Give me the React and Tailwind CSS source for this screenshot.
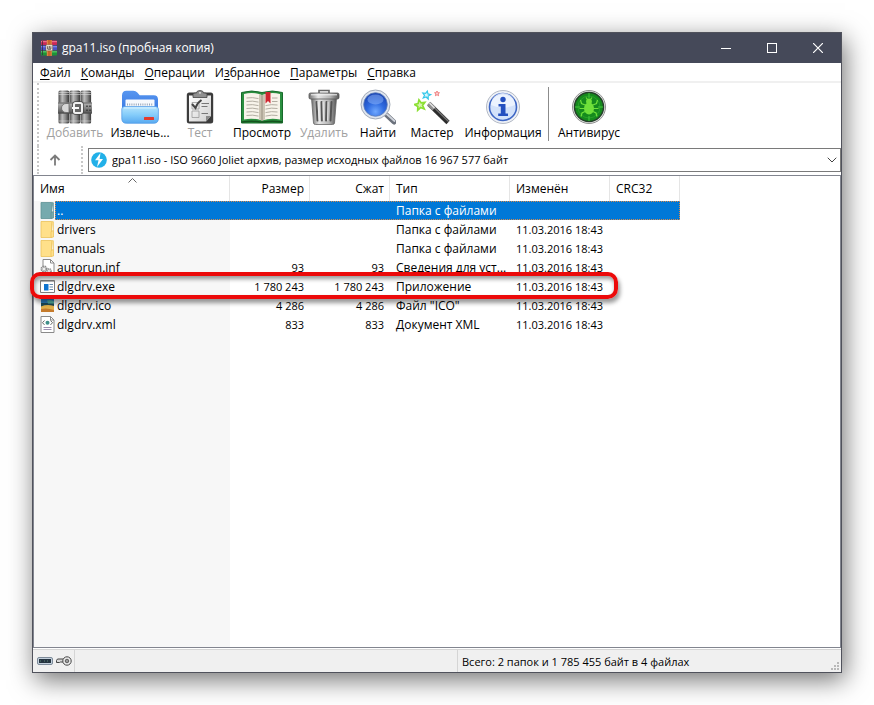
import { ChevronDown } from 'lucide-react';

const menu = [
    ['', 'Ф', 'айл'],
    ['', 'К', 'оманды'],
    ['', 'О', 'перации'],
    ['И', 'з', 'бранное'],
    ['', 'П', 'араметры'],
    ['', 'С', 'правка'],
];

function AppIcon() {
    return (
        <svg viewBox="0 0 16 16" className="h-4 w-4">
            <rect x="0" y="0.5" width="16" height="4.6" rx="0.8" fill="#c92a58" />
            <rect x="0" y="1" width="16" height="1.2" fill="#ee6c8c" />
            <rect x="0" y="5.6" width="16" height="4.6" rx="0.8" fill="#4a52c8" />
            <rect x="0" y="6.1" width="16" height="1.2" fill="#8189ee" />
            <rect x="0" y="10.8" width="16" height="4.7" rx="0.8" fill="#1c9438" />
            <rect x="0" y="11.2" width="16" height="1.2" fill="#5cc96a" />
            <path d="M1.5 1v14" stroke="#3b2530" strokeWidth="0.7" />
            <rect x="5.8" y="0" width="5" height="16" fill="#c8642b" />
            <path d="M6.4 0v16M10.2 0v16" stroke="#f0a25c" strokeWidth="0.6" />
            <rect x="5" y="4.8" width="6.6" height="6" rx="0.6" fill="#fbf6ea" stroke="#6d4a2b" strokeWidth="0.5" />
            <path d="M6.7 6.2v3h3.200v-3M8.300 6v2.600" fill="none" stroke="#33241c" strokeWidth="0.8" />
        </svg>
    );
}

function AddIcon() {
    return (
        <svg viewBox="0 0 34 34" className="h-[34px] w-[34px]">
            <defs>
                <linearGradient id="bookSpine">
                    <stop offset="0" stopColor="#4a4a4a" />
                    <stop offset="0.35" stopColor="#bdbdbd" />
                    <stop offset="0.65" stopColor="#8a8a8a" />
                    <stop offset="1" stopColor="#363636" />
                </linearGradient>
                <linearGradient id="strap" x1="0" y1="0" x2="0" y2="1">
                    <stop offset="0" stopColor="#bcbcbc" />
                    <stop offset="0.5" stopColor="#858585" />
                    <stop offset="1" stopColor="#515151" />
                </linearGradient>
            </defs>
            {[0.5, 11.5, 22.5].map((x) => (
                <g key={x}>
                    <rect x={x} y="0.5" width="10.6" height="33" rx="1.5" fill="url(#bookSpine)" />
                    <path d={`M${x} 2.5h10.6M${x} 4.5h10.6M${x} 31h10.6`} stroke="#e2e2e2" strokeWidth="0.8" opacity="0.7" />
                </g>
            ))}
            <rect x="0" y="12.5" width="34" height="11" fill="url(#strap)" />
            <path d="M0 13h34M0 23h34" stroke="#4a4a4a" strokeWidth="0.8" />
            <path d="M11 13.500H8a4.500 4.500 0 0 0 0 9h3z" fill="#d8d8d8" stroke="#666" strokeWidth="0.8" />
            <rect x="16" y="13" width="8" height="10" rx="1.500" fill="none" stroke="#444" strokeWidth="3.400" />
            <rect x="16" y="13" width="8" height="10" rx="1.500" fill="#666" stroke="#f0f0f0" strokeWidth="2" />
            <path d="M14 18h7" stroke="#fafafa" strokeWidth="2" />
            <path d="M29 15.500v5.500M32 15.500v5.500" stroke="#333" strokeWidth="1.400" strokeDasharray="1.500 2.500" />
        </svg>
    );
}

function ExtractIcon() {
    return (
        <svg viewBox="0 0 38 34" className="h-[34px] w-[38px]">
            <defs>
                <linearGradient id="folderBack" x1="0" y1="0" x2="0" y2="1">
                    <stop offset="0" stopColor="#5796f0" />
                    <stop offset="1" stopColor="#2f6fdd" />
                </linearGradient>
                <linearGradient id="folderFront" x1="0" y1="0" x2="0" y2="1">
                    <stop offset="0" stopColor="#b4e4fd" />
                    <stop offset="0.5" stopColor="#84ccfa" />
                    <stop offset="1" stopColor="#58a9f0" />
                </linearGradient>
            </defs>
            <path d="M1 5.5Q1 .8 5.5 .8h6.8q2.5 0 4 1.8l2.4 2.6h14Q37 5.2 37 9.500v18H1z" fill="url(#folderBack)" />
            <rect x="4.500" y="9.500" width="29" height="12" rx="1" fill="#f6f9fd" />
            <path d="M6 14.500h26" stroke="#9aa7ba" strokeWidth="2" strokeDasharray="1 1.200" />
            <path d="M.8 19q0-2.500 3-2.500h30.400q3.200 0 3.200 2.500v10q-.4 4.300-4.500 4.300H5.300Q1.200 33.300.8 29z" fill="url(#folderFront)" stroke="#4b96e6" strokeWidth="0.7" />
            <path d="M3 18h32" stroke="#d7f1ff" strokeWidth="1" />
            <rect x="23" y="27" width="10" height="3" rx="0.5" fill="#e23b2e" />
        </svg>
    );
}

function TestIcon() {
    return (
        <svg viewBox="0 0 28 34" className="h-[34px] w-7">
            <defs>
                <linearGradient id="paper" x1="0" y1="0" x2="1" y2="1">
                    <stop offset="0" stopColor="#fff" />
                    <stop offset="1" stopColor="#cfcfcf" />
                </linearGradient>
            </defs>
            <rect x="0.8" y="2.5" width="26.4" height="31" rx="2.500" fill="#3c3c3c" />
            <path d="M3 5.500h22v20.500l-5 5.500H3z" fill="url(#paper)" />
            <path d="M25 26h-5v5.500z" fill="#8a8a8a" />
            <path d="M7 7.500V4.500Q7 3 9 3h1.500Q10.500.5 14 .5T17.500 3H19q2 0 2 1.500v3z" fill="#8f8f8f" stroke="#444" strokeWidth="0.8" />
            <circle cx="14" cy="2.800" r="0.900" fill="#eee" />
            <path d="M6 12.500h7v6.500H6zM6 21h7v6.500H6z" fill="none" stroke="#9a9a9a" strokeWidth="0.8" />
            <path d="M6 14l3.500 4Q11 13 15.500 10" fill="none" stroke="#444" strokeWidth="2" />
            <path d="M15.500 13.500h7.500M15.500 16.500h6M15.500 23.500h6.500" stroke="#777" strokeWidth="1" />
        </svg>
    );
}

function ViewIcon() {
    return (
        <svg viewBox="0 0 44 34" className="h-[34px] w-11">
            <path d="M1.500 2.500q10-3 20.500 0 10.500-3 20.500 0V33h-41z" fill="#2a8f3f" stroke="#176a2b" />
            <path d="M4 4q9-2.500 18 1v25.500q-9-3-18-1z" fill="#f7f3ea" />
            <path d="M40 4q-9-2.500-18 1v25.500q9-3 18-1z" fill="#f7f3ea" />
            <path d="M19 4.300l3 .9v25.300l-3-1zM25 4.300l-3 .9v25.300l3-1z" fill="#cbc4b4" />
            <path
                d="M6.500 8q6-1 12 .6M6.500 11.500q6-1 12 .6M6.500 15q6-1 12 .6M6.500 18.500q6-1 12 .6M6.500 22q6-1 12 .6M6.500 25.500q6-1 12 .6M25.500 15.600q6-1.600 12-.6M25.500 19.100q6-1.600 12-.6M25.500 22.600q6-1.600 12-.6M25.500 26.100q6-1.600 12-.6M32 8h5.500M32 11.500h5.500"
                fill="none"
                stroke="#aaa59a"
                strokeWidth="0.9"
            />
            <path d="M25.500 2h5v11.500L28 11l-2.500 2.500z" fill="#cf2530" />
            <path d="M22 5v26" stroke="#8d8676" strokeWidth="0.8" />
            <path d="M2 32q10-1.500 18 0h4q8-1.500 18 0" fill="none" stroke="#14531f" strokeWidth="1.500" />
        </svg>
    );
}

function DeleteIcon() {
    return (
        <svg viewBox="0 0 32 36" className="h-9 w-8">
            <defs>
                <linearGradient id="bin">
                    <stop offset="0" stopColor="#707070" />
                    <stop offset="0.3" stopColor="#e6e6e6" />
                    <stop offset="0.7" stopColor="#b5b5b5" />
                    <stop offset="1" stopColor="#555" />
                </linearGradient>
            </defs>
            <path d="M11 4V1.500h10V4" fill="none" stroke="#666" strokeWidth="1.600" />
            <path d="M3.500 9h25l-2 25q-.2 1.500-2 1.500h-17q-1.800 0-2-1.500z" fill="url(#bin)" stroke="#666" strokeWidth="0.8" />
            <path d="M8.500 13l1 18.500M13.500 13l.4 18.500M18.500 13l-.4 18.500M23.500 13l-1 18.500" stroke="#555" strokeWidth="2" strokeLinecap="round" />
            <path d="M10 13l1 18.500M15 13l.4 18.500M20 13l-.4 18.500" stroke="#f0f0f0" strokeWidth="0.8" />
            <rect x="1" y="4" width="30" height="6" rx="1.500" fill="url(#bin)" stroke="#555" strokeWidth="0.8" />
            <path d="M3 5.800h26" stroke="#f5f5f5" strokeWidth="1" />
        </svg>
    );
}

function FindIcon() {
    return (
        <svg viewBox="0 0 36 36" className="h-9 w-9">
            <defs>
                <radialGradient id="lens" cx="0.5" cy="0.8" r="0.75">
                    <stop offset="0" stopColor="#6fa8ff" />
                    <stop offset="0.5" stopColor="#2f6be0" />
                    <stop offset="1" stopColor="#1a45b5" />
                </radialGradient>
            </defs>
            <path d="M25 24.500l9 8.500" stroke="#6b717c" strokeWidth="5" strokeLinecap="round" />
            <path d="M25.500 24l9 8" stroke="#d0d4dc" strokeWidth="1.800" strokeLinecap="round" />
            <circle cx="15.500" cy="15.500" r="14.500" fill="#dfe5ee" stroke="#a3abb8" strokeWidth="1" />
            <circle cx="15.500" cy="15.500" r="11.800" fill="url(#lens)" stroke="#5f7fb8" strokeWidth="0.8" />
            <ellipse cx="15.500" cy="10.500" rx="8" ry="5" fill="#9cc2ff" opacity="0.45" />
        </svg>
    );
}

function WizardIcon() {
    const star = 'M0-5L1.500-1.700 5-1.500 2.300.9 3.200 4.500 0 2.500-3.200 4.500-2.300.9-5-1.500-1.500-1.700z';

    return (
        <svg viewBox="0 0 36 36" className="h-9 w-9">
            <path d={star} transform="translate(6 16) rotate(-12) scale(1.050)" fill="#d8f5b0" stroke="#8be032" strokeWidth="1.600" />
            <path d={star} transform="translate(12.500 6) rotate(12) scale(.8)" fill="#d8f5fb" stroke="#35c8ea" strokeWidth="1.500" />
            <path d={star} transform="translate(23 4.500) scale(.5)" fill="#fbd5d5" stroke="#ec6b6b" strokeWidth="1.600" />
            <path d="M15 15l19 18.500" stroke="#2d2d2d" strokeWidth="4.600" />
            <path d="M15.800 14.200l19 18.500" stroke="#777" strokeWidth="1.200" />
            <path d="M14.500 14.500l5.500 5.400" stroke="#8e8e8e" strokeWidth="4.600" />
            <path d="M15.500 14l5 5" stroke="#e3e3e3" strokeWidth="1.500" />
        </svg>
    );
}

function InfoIcon() {
    return (
        <svg viewBox="0 0 36 36" className="h-9 w-9">
            <circle cx="18" cy="18" r="16.500" fill="#eef1f6" stroke="#b4bac6" />
            <circle cx="18" cy="18" r="13.500" fill="#d3e2fa" stroke="#3e66c4" strokeWidth="1.600" />
            <path d="M6 16a12 12 0 0 1 24 0q-12 5-24 0z" fill="#f2f7ff" opacity="0.8" />
            <circle cx="18" cy="10.500" r="2.700" fill="#2450c0" />
            <path d="M13.500 15h7v9.500H23V27H13.200v-2.500h2.600v-7h-2.300z" fill="#2450c0" />
        </svg>
    );
}

function AntivirusIcon() {
    return (
        <svg viewBox="0 0 36 36" className="h-9 w-9">
            <circle cx="18" cy="18" r="16.500" fill="#e6e6e6" stroke="#8f8f8f" />
            <circle cx="18" cy="18" r="14.500" fill="#158a1d" stroke="#24402a" strokeWidth="1.500" />
            <circle cx="18" cy="18" r="11" fill="none" stroke="#2ea52e" strokeWidth="0.8" />
            <path d="M18 4v5M18 27v5M4 18h5M27 18h5" stroke="#42c83a" strokeWidth="1" />
            <ellipse cx="18" cy="19.500" rx="5" ry="6" fill="#6fe03a" />
            <circle cx="18" cy="12.500" r="2.900" fill="#6fe03a" />
            <path
                d="M14 16l-3.500-1.500L9.500 11M13.500 19.500H8.500M14 22.500L11 24l-1 3.500M22 16l3.500-1.500L26.500 11M22.500 19.500H27.500M22 22.500L25 24l1 3.500M16.500 10.500L15 8.500M19.500 10.500L21 8.500"
                fill="none"
                stroke="#6fe03a"
                strokeWidth="1.200"
            />
        </svg>
    );
}

const tools = [
    { label: 'Добавить', icon: AddIcon, width: 'w-16', disabled: true },
    { label: 'Извлечь...', icon: ExtractIcon, width: 'w-[66px]' },
    { label: 'Тест', icon: TestIcon, width: 'w-[54px]', disabled: true },
    { label: 'Просмотр', icon: ViewIcon, width: 'w-[70px]' },
    { label: 'Удалить', icon: DeleteIcon, width: 'w-[54px]', disabled: true },
    { label: 'Найти', icon: FindIcon, width: 'w-[54px]' },
    { label: 'Мастер', icon: WizardIcon, width: 'w-[54px]' },
    { label: 'Информация', icon: InfoIcon, width: 'w-[88px]' },
];

function ToolButton({ label, icon: Icon, width, disabled }) {
    return (
        <button
            type="button"
            disabled={disabled}
            className={`${width} flex shrink-0 flex-col items-center pt-[6px] whitespace-nowrap ${disabled ? 'text-[#a0a0a0]' : 'text-black'}`}
        >
            <span className="flex h-9 items-center justify-center">
                <Icon />
            </span>
            <span className="leading-4">{label}</span>
        </button>
    );
}

function FolderIcon({ fill, edge }) {
    return (
        <svg viewBox="0 0 15 17" className="h-[17px] w-[15px]">
            <path d="M1 .5h10.500v16H1z" fill={fill} stroke={edge} strokeWidth="0.8" />
            <path d="M11.500.7h1.800v9" fill={fill} stroke={edge} strokeWidth="0.8" />
            <path d="M11 10.500l2.500-1v6.500L11 16.500z" fill={fill} stroke={edge} strokeWidth="0.8" />
        </svg>
    );
}

function InfIcon() {
    return (
        <svg viewBox="0 0 15 17" className="h-[17px] w-[15px]">
            <path d="M3 .5h7.500L14 4v12.500H3z" fill="#fff" stroke="#8a8a8a" />
            <path d="M10.500.5V4H14" fill="none" stroke="#8a8a8a" />
            <circle cx="4" cy="10" r="2.500" fill="#eee" stroke="#8c8c8c" strokeWidth="2" strokeDasharray="1.400 .6" />
            <circle cx="9" cy="12" r="2" fill="#eee" stroke="#999" strokeWidth="2" strokeDasharray="1.200 .6" />
        </svg>
    );
}

function ExeIcon() {
    return (
        <svg viewBox="0 0 15 17" className="h-[17px] w-[15px]">
            <path d="M.5 2.500h14v12H.5z" fill="#fff" stroke="#7d7d7d" />
            <path d="M1 3.500h13" stroke="#b5b5b5" />
            <path d="M4 6h4.500v6.500H4z" fill="#0f74cf" />
            <path d="M9.500 6.500H13M9.500 9H13M9.500 11.500H13" stroke="#6b8fae" />
        </svg>
    );
}

function IcoIcon() {
    return (
        <svg viewBox="0 0 15 17" className="h-[17px] w-[15px]">
            <path d="M1 2h13v4.500H1z" fill="#2e7fc0" />
            <path d="M1 6h13v4H1z" fill="#1f4a55" />
            <path d="M1 9.500q6-2.500 13-.5v6H1z" fill="#e2b04a" />
            <path d="M1 12q6-1.500 13 1v2H1z" fill="#c57b2c" />
            <path d="M7 3.500q4-1.500 7 1v2H8z" fill="#57b7a5" />
        </svg>
    );
}

function XmlIcon() {
    return (
        <svg viewBox="0 0 15 17" className="h-[17px] w-[15px]">
            <path d="M1 .5h9.500L14 4v12.500H1z" fill="#fff" stroke="#8a8a8a" />
            <path d="M10.500.5V4H14" fill="none" stroke="#8a8a8a" />
            <path d="M4.500 4.500l-2 2.200 2 2.200M10.500 4.500l2 2.200-2 2.200" fill="none" stroke="#555" strokeWidth="0.9" />
            <circle cx="7.500" cy="6.700" r="2" fill="#3f8f8a" />
            <path d="M3.500 11.500h8M3.500 13.500h8" stroke="#9c8fb0" />
        </svg>
    );
}

const parentFolder = <FolderIcon fill="#76aaae" edge="#5f9296" />;
const folder = <FolderIcon fill="#ffe08a" edge="#ecc35a" />;
const date = '11.03.2016 18:43';

const rows = [
    { name: '..', icon: parentFolder, type: 'Папка с файлами', selected: true },
    { name: 'drivers', icon: folder, type: 'Папка с файлами', date },
    { name: 'manuals', icon: folder, type: 'Папка с файлами', date },
    { name: 'autorun.inf', icon: <InfIcon />, size: '93', type: 'Сведения для уст...', date },
    { name: 'dlgdrv.exe', icon: <ExeIcon />, size: '1 780 243', type: 'Приложение', date, marked: true },
    { name: 'dlgdrv.ico', icon: <IcoIcon />, size: '4 286', type: 'Файл "ICO"', date },
    { name: 'dlgdrv.xml', icon: <XmlIcon />, size: '833', type: 'Документ XML', date },
];

function FileRow({ row }) {
    const cell = row.selected ? 'bg-[#0078d7] text-white' : '';

    return (
        <tr className="relative h-[19px]">
            <td className="p-0">
                <div className="flex h-[19px] items-center pl-[6px]">
                    {row.icon}
                    <span className={`h-full flex-1 pl-[2px] leading-[19px] ${cell}`}>{row.name}</span>
                </div>
                {row.selected && (
                    <span className="absolute inset-y-0 right-0 left-[21px] border border-dotted border-[#d98a4a]" />
                )}
                {row.marked && (
                    <span className="absolute -top-[5px] right-[62px] -bottom-[3px] -left-1 z-10 rounded-[10px] border-4 border-[#ec0a0a] shadow-[2px_4px_4px_rgba(0,0,0,0.4),inset_1px_3px_4px_rgba(0,0,0,0.4)]" />
                )}
            </td>
            <td className={`p-0 pr-[6px] text-right text-[11px] ${cell}`}>{row.size}</td>
            <td className={`p-0 pr-[6px] text-right text-[11px] ${cell}`}>{row.size}</td>
            <td className={`p-0 pl-[6px] ${cell}`}>{row.type}</td>
            <td className={`p-0 pl-[6px] text-[11px] ${cell}`}>{row.date}</td>
            <td className={`p-0 ${cell}`} />
        </tr>
    );
}

function Header({ children, className = '' }) {
    return (
        <th scope="col" className={`border-r border-[#e5e5e5] bg-white p-0 pr-[5px] pl-[6px] font-normal ${className}`}>
            {children}
        </th>
    );
}

function TitleBar() {
    return (
        <header className="flex h-[30px] items-center bg-[#454959] text-white">
            <div className="flex flex-1 items-center gap-[5px] pl-2">
                <AppIcon />
                <h1>gpa11.iso (пробная копия)</h1>
            </div>
            <button type="button" aria-label="Свернуть" className="flex h-full w-[46px] items-center justify-center">
                <span className="h-px w-[10px] bg-white" />
            </button>
            <button type="button" aria-label="Развернуть" className="flex h-full w-[46px] items-center justify-center">
                <span className="h-[10px] w-[10px] border border-white" />
            </button>
            <button type="button" aria-label="Закрыть" className="flex h-full w-[46px] items-center justify-center">
                <svg viewBox="0 0 10 10" className="h-[10px] w-[10px]">
                    <path d="M0 0l10 10M10 0L0 10" stroke="#fff" strokeWidth="1.200" />
                </svg>
            </button>
        </header>
    );
}

function AddressBar() {
    return (
        <div className="flex h-7 items-center pl-1">
            <div className="h-full border-l-2 border-dotted border-[#c8c8c8]" />
            <button type="button" aria-label="Вверх" className="flex w-8 justify-center">
                <svg viewBox="0 0 12 12" className="h-3 w-3">
                    <path d="M6 11.500V1.500M1.500 6L6 1.500 10.500 6" fill="none" stroke="#7b7b7b" strokeWidth="1.800" />
                </svg>
            </button>
            <div className="ml-[10px] h-full border-l-2 border-dotted border-[#c8c8c8]" />
            <div className="relative ml-[5px] flex-1">
                <svg viewBox="0 0 16 16" className="pointer-events-none absolute top-1 left-[3px] h-4 w-4">
                    <circle cx="8" cy="8" r="7.800" fill="#22b0e8" />
                    <path d="M9.500 1L4 8.300h3.500L6 15l6-8H8.600z" fill="#fff" />
                </svg>
                <select
                    aria-label="Путь"
                    className="h-6 w-full appearance-none rounded-none border border-[#7a7a7a] bg-transparent pr-6 pl-[23px] text-[11px] leading-4"
                >
                    <option>gpa11.iso - ISO 9660 Joliet архив, размер исходных файлов 16 967 577 байт</option>
                </select>
                <ChevronDown className="pointer-events-none absolute top-1 right-px h-4 w-4 text-[#444]" strokeWidth={1.5} />
            </div>
        </div>
    );
}

function StatusBar() {
    return (
        <footer className="mt-px flex h-[23px] border-t border-[#d5d5d5] bg-[#f0f0f0]">
            <div className="flex w-[424px]">
                <div className="flex w-[42px] items-center gap-[3px] border-r border-[#d5d5d5] pl-1">
                    <svg viewBox="0 0 16 8" className="h-2 w-4">
                        <rect x="0.500" y="0.500" width="15" height="7" rx="1.500" fill="#c4d0dc" stroke="#7c8a99" />
                        <rect x="2" y="2" width="12" height="4" fill="#253440" />
                        <path d="M3 4h1M7 4h1M10 4h1" stroke="#5d8577" />
                    </svg>
                    <svg viewBox="0 0 16 10" className="h-[10px] w-4">
                        <path d="M7 3H1.500L.5 4.500v2h3L4.500 6H7" fill="#d9d9d9" stroke="#444" />
                        <circle cx="11" cy="5" r="4.200" fill="#eee" stroke="#444" />
                        <circle cx="11" cy="5" r="1.800" fill="#999" stroke="#444" strokeWidth="0.8" />
                    </svg>
                </div>
            </div>
            <div className="flex flex-1 items-center border-l border-[#d5d5d5] pt-[2px] pl-1">
                <p className="flex-1 text-[11px]">Всего: 2 папок и 1 785 455 байт в 4 файлах</p>
                <svg viewBox="0 0 9 9" className="mr-px mb-px h-[9px] w-[9px] self-end">
                    <path d="M6 0h2v2H6zM6 3h2v2H6zM6 6h2v2H6zM3 3h2v2H3zM3 6h2v2H3zM0 6h2v2H0z" fill="#b8b8b8" />
                </svg>
            </div>
        </footer>
    );
}

export default function App() {
    return (
        <div className="flex min-h-screen bg-white p-8 font-['Open_Sans','Noto_Sans',sans-serif] text-[12px] leading-4 text-black">
            <main className="flex min-w-0 flex-1 flex-col border border-[#50525c] bg-white shadow-[3px_7px_24px_rgba(0,0,0,0.55)]">
                <TitleBar />

                <nav className="flex h-5 items-start gap-[10px] border-b-2 border-[#f0f0f0] pt-[2px] pl-[7px]">
                    {menu.map(([before, key, after]) => (
                        <button key={key} type="button" className="leading-4">
                            {before}
                            <u className="underline-offset-2">{key}</u>
                            {after}
                        </button>
                    ))}
                </nav>

                <div className="flex h-[63px] items-start pl-1">
                    <div className="h-full w-[6px] border-l-2 border-dotted border-[#c8c8c8]" />
                    {tools.map((tool) => (
                        <ToolButton key={tool.label} {...tool} />
                    ))}
                    <div className="mx-px mt-1 h-[54px] w-px bg-[#8c8c8c]" />
                    <ToolButton label="Антивирус" icon={AntivirusIcon} width="w-[78px]" />
                </div>

                <AddressBar />

                <section className="mt-px flex-1 border border-[#82858f] bg-[linear-gradient(to_right,#f7f7f7_196px,#fff_196px)]">
                    <table className="w-[646px] table-fixed border-separate border-spacing-0 text-left whitespace-nowrap">
                        <thead>
                            <tr className="h-[25px]">
                                <Header className="relative w-[196px]">
                                    Имя
                                    <svg viewBox="0 0 9 5" className="absolute top-[2px] left-[94px] h-[5px] w-[9px]">
                                        <path d="M.5 4.500l4-4 4 4" fill="none" stroke="#666" />
                                    </svg>
                                </Header>
                                <Header className="w-20 text-right">Размер</Header>
                                <Header className="w-20 text-right">Сжат</Header>
                                <Header className="w-[120px]">Тип</Header>
                                <Header className="w-[100px]">Изменён</Header>
                                <Header className="w-[70px]">CRC32</Header>
                            </tr>
                        </thead>
                        <tbody>
                            {rows.map((row) => (
                                <FileRow key={row.name} row={row} />
                            ))}
                        </tbody>
                    </table>
                </section>

                <StatusBar />
            </main>
        </div>
    );
}
